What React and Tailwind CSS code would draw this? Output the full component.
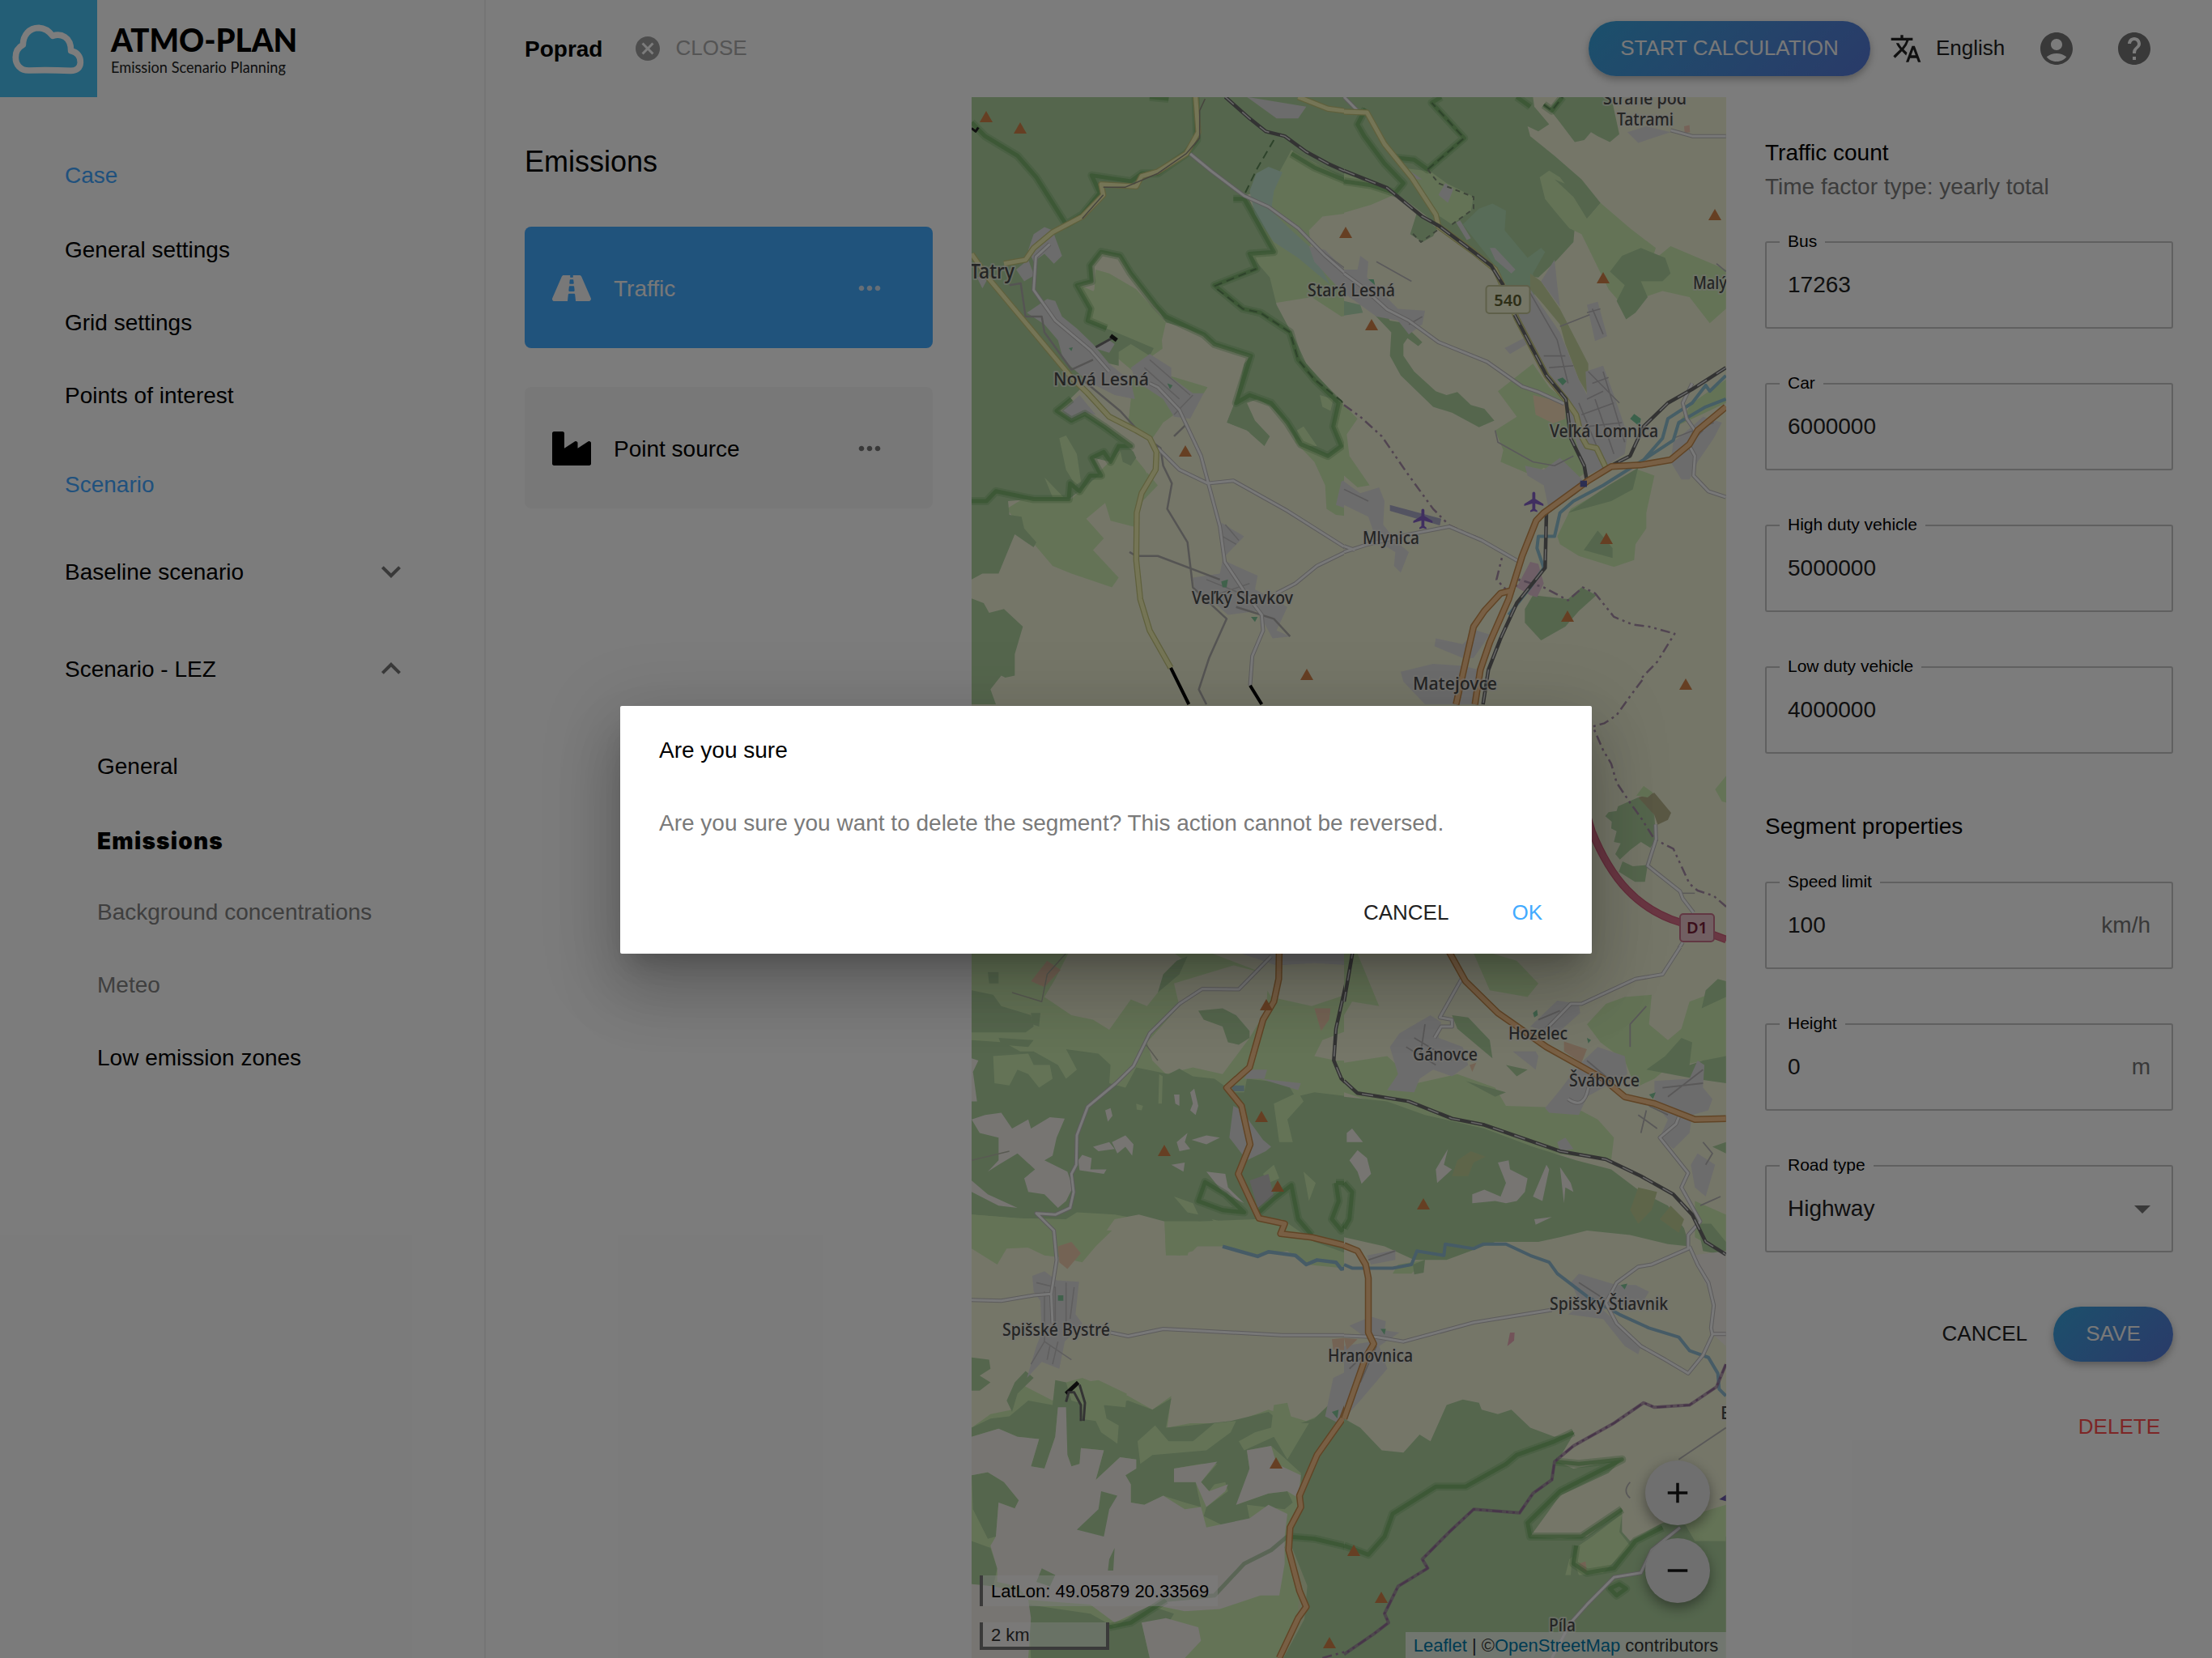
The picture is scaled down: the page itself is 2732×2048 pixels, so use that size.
import React from "react";
import { FaRoad, FaIndustry } from "react-icons/fa";
import {
  MdAccountCircle,
  MdAdd,
  MdArrowDropDown,
  MdCancel,
  MdExpandLess,
  MdExpandMore,
  MdHelp,
  MdMoreHoriz,
  MdRemove,
  MdTranslate,
} from "react-icons/md";

const FOREST = "#add19e";
const MEADOW = "#cdebb0";
const FARM = "#eef0d5";
const TOWN = "#dddcdc";
const BARE = "#f2eee9";
const SAND = "#f5dcba";

function Area({ d, fill }) {
  return <path d={d} fill={fill} />;
}

function Line({ d, color, width, dash, opacity = 1 }) {
  return (
    <path
      d={d}
      fill="none"
      stroke={color}
      strokeWidth={width}
      strokeDasharray={dash}
      opacity={opacity}
      strokeLinejoin="round"
      vectorEffect="non-scaling-stroke"
    />
  );
}

const ROADS = {
  minor: ["#bdbbbb", 5, "#f4f4f4", 3],
  thin: ["#b5b5b1", 2, "#c4c4c0", 1],
  secondary: ["#c3c57c", 7.5, "#eeeeb0", 5],
  primary: ["#c68c4d", 8.5, "#f5c28c", 5.5],
  motorway: ["#cc5c77", 9.5, "#d8708a", 7],
};

function Road({ d, kind = "minor" }) {
  const [c1, w1, c2, w2] = ROADS[kind];
  return (
    <>
      <Line d={d} color={c1} width={w1} />
      <Line d={d} color={c2} width={w2} />
    </>
  );
}

function Rail({ d }) {
  return (
    <>
      <Line d={d} color="#686868" width={4.5} />
      <Line d={d} color="#d2d2d2" width={1.6} dash="14 14" />
    </>
  );
}

function Park({ d }) {
  return (
    <>
      <Line d={d} color="#75ae68" width={10} opacity={0.35} />
      <Line d={d} color="#6ba85e" width={5} opacity={0.6} />
    </>
  );
}

function Border({ d, color = "#a58ca5" }) {
  return <Line d={d} color={color} width={2.5} dash="12 5 3 5 3 5" />;
}

function NorthWest() {
  return (
    <g transform="translate(1190 110) scale(0.33333 0.48469)">
      <Area fill={FARM} d="M0 0H1440V1580H0Z" />
      <Area fill={MEADOW} d="M1200 150L1440 240V1090L1380 1085L1345 1070L1340 1010L1300 950L1230 900L1100 500L1050 420Z" />
      <Area fill={FARM} d="M1440 315L1330 325L1280 360L1290 420L1440 480ZM1155 545L1290 530L1400 580L1440 575V830L1390 790L1270 700Z" />
      <Area fill={MEADOW} d="M750 595L740 660L700 680L760 730L905 760L890 775L740 850L690 900L610 850L630 720L560 680L480 640L430 500Z" />
      <Area fill={MEADOW} d="M600 910L720 1010L650 1060L630 1115L545 1100L525 1055L455 1095L520 1145L480 1175L575 1245L550 1270L400 1235L330 1215L250 1150L160 1070L230 1040L400 1045Z" />
      <Area fill={FOREST} d="M30 20H1440V240L1215 155L1140 250L1050 270L1150 415L1060 420L1135 480L1160 550L1230 640L1270 700L1390 790L1370 860L1400 910L1350 935L1290 915L1230 890L1200 850L1140 810L1090 790L1050 800L1080 845L1135 885L1115 910L1050 870L975 850L1010 790L1040 700L1065 680L930 650L890 625L750 595L710 550L620 470L580 425L510 415L475 450L480 490L420 500L470 560L460 590L530 610L600 630L705 660L690 680L620 650L575 670L575 705L480 690L440 760L350 820L400 845L450 830L520 860L620 910L640 940L620 960L590 950L580 920L545 950L480 940L510 980L430 1025L390 1045L260 1045L165 1050L170 1085L215 1090L225 1120L270 1155L260 1168L190 1135L130 1235L70 1235L30 1250ZM30 1298L75 1310L95 1335L150 1325L220 1370L190 1440L190 1495L155 1500L140 1495L100 1530L120 1568H30Z" />
      <Area fill={MEADOW} d="M490 460L540 470L640 510L750 595L735 640L650 610L520 555L470 530L485 510ZM355 890L380 883L420 930L435 1000L415 1010L380 970ZM300 990L370 1040L330 1040ZM1320 780L1370 790L1360 820L1330 810ZM1235 870L1260 860L1310 910L1260 910Z" />
      <Area fill={FARM} d="M750 595L830 610L890 630L930 650L1045 685L1000 800L975 850L1060 875L900 1000L700 900L740 850L880 790L905 760L850 740L740 680L735 640ZM455 745L620 790L610 850L720 900L680 980L640 930L520 860Z" />
      <Area fill="#bfe3cf" d="M1060 260L1085 215L1130 198L1182 212L1150 260L1140 310L1200 350L1280 400L1360 500L1240 430L1150 390L1080 320Z" />
      <Area fill={TOWN} d="M240 410L260 370L300 352L330 360L365 425L335 445L300 420L260 440ZM195 460L240 435L262 475L225 490ZM50 480L100 470L70 508ZM235 570L310 535L340 540L365 580L420 610L480 650L540 700L620 745L635 790L560 780L460 745L370 690L350 640L300 600ZM365 820L430 780L490 830L450 825L400 845ZM620 710L690 675L770 710L770 735L850 775L890 775L840 840L780 835L740 790L640 745ZM485 660L540 640L560 650L540 672ZM1280 400L1340 410L1440 480V530L1380 500L1300 440ZM955 1105L1040 1140L970 1190ZM850 1245L950 1235L960 1200L1090 1240L1080 1275L1200 1320L1160 1380L1210 1395L1145 1400L1090 1330L980 1340L930 1310L860 1290ZM1380 1060L1400 1000L1440 990V1075ZM1050 20L1270 45L1240 75L1160 75Z" />
      <Line d="M170 500L212 495L230 580L290 580L300 620L400 715L480 690M440 740L580 820L660 880L730 915L740 960L772 1005L755 1070L830 1155L850 1270L975 1350L910 1450L872 1530L900 1568M615 1180L640 1190L720 1190L950 1250M1010 1320L1150 1350L1210 1395M780 885L825 855" color="#adacaa" width={2.5} />
      <Line d="M970 1110L1020 1150M960 1140L1010 1160M690 690L840 780M670 710L800 790M780 830L850 780M1300 400L1440 470M900 1250L1080 1300M930 1290L1060 1260" color="#c0bfbf" width={1.5} />
      <Park d="M30 85L80 120L200 170L270 225L380 345L440 320L505 265L475 220L620 235L660 215L720 215L825 165L865 130L860 20" />
      <Park d="M690 20L760 25M1215 165L1300 200L1440 240M30 1050L85 1050L120 1025L260 1045L390 1045L395 1005L430 1025L470 985L510 985L475 940L520 925L545 950L575 910L620 910L520 860L450 828L400 845L345 820L400 790" />
      <Park d="M530 610L460 590L470 560L420 500L475 490L470 450L510 415L580 425L620 470L710 550L750 580L890 625L930 650L1065 680L1010 800L1060 780L1140 800L1200 850L1250 905L1350 935L1400 910L1370 860L1390 800L1300 740L1240 690L1210 620L1100 570L1035 560L930 500L1085 458L1060 420L1150 415L1040 280L1000 280" />
      <Line d="M1150 130L1090 200L1040 270M930 502L1085 458M940 510L1035 560L1100 570L1210 620L1240 690L1300 740L1400 795L1440 830" color="#5f8a58" width={2} dash="10 6" />
      <Rail d="M970 20L1060 75L1120 108L1190 120L1270 160L1350 190L1440 218" />
      <Road kind="secondary" d="M1240 20L1350 50L1440 58M860 20L870 110L825 165L720 210L660 222L640 248L510 243L518 270L440 325L330 365L260 405L230 435L150 445" />
      <Line d="M895 25L875 55L875 125L825 165L720 215L600 250L518 250M518 270L440 330" color="#918d80" width={1.5} />
      <Road d="M840 165L920 210L1040 272L1130 300L1240 355L1340 425L1440 485M320 395L268 428L260 512L340 590L470 665L540 720M690 750L720 760L800 818L880 935L950 1115L968 1205L1050 1290L1105 1340L1110 1380L1070 1445L1062 1520M720 915L800 970L905 1005L1000 998L1200 1075L1430 1175L1310 1215L1230 1260L1160 1285" />
      <Road kind="secondary" d="M30 420L90 480L400 735L460 775L540 835L640 870L690 890L715 925L712 970L660 1030L642 1080L640 1200L655 1300L690 1380L768 1475" />
      <Line d="M768 1475L835 1568M1062 1520L1105 1568" color="#050505" width={4} />
      <Line d="M490 658L550 635" color="#6e6e6e" width={3} />
      <Line d="M545 628L568 640" color="#1e1e1e" width={5} />
      <Line d="M30 100L45 108L55 98" color="#222" width={3} />
      <Area fill="#83c79a" d="M755 750L775 755L765 765ZM955 1255L980 1250L975 1270L960 1270ZM1065 1345L1090 1345L1080 1358ZM390 660L405 658L400 668Z" />
    </g>
  );
}

function NorthEast() {
  return (
    <g transform="translate(1660 110) scale(0.33333 0.48469)">
      <Area fill={FARM} d="M0 0H1440V1580H0Z" />
      <Area fill={FOREST} d="M0 20H700L705 45L760 90L720 108L680 95L690 120L780 170L880 230L950 290L900 330L860 310L850 390L790 435L720 480L600 470L440 390L345 345L260 300L200 270L0 230Z" />
      <Area fill={FOREST} d="M800 20H990L1020 115L985 135L940 120L915 110L890 130L855 135L800 85L760 50Z" />
      <Area fill={MEADOW} d="M0 215L200 265L100 295L0 315ZM205 200L320 210L380 240L480 275L470 310L400 345L345 320L260 240ZM725 225L760 208L800 225L850 270L900 330L950 290L1060 355L1155 405L1140 440L1210 400L1415 460V560L1355 597L1280 530L1180 515L1030 550L980 510L880 370L835 355L780 310L745 280Z" />
      <Area fill={FOREST} d="M985 465L1030 425L1100 405L1190 430L1210 470L1180 490L1100 490L1125 530L1080 570L1045 587L1010 540L1040 500ZM270 315L345 355L330 375L290 390L245 370ZM85 555L140 560L170 590L215 595L290 645L275 655L235 635L220 650L220 680L260 720L340 770L380 780L420 772L470 805L520 815L557 845L500 862L400 825L330 810L210 730L170 680L175 620Z" />
      <Area fill={FOREST} d="M780 230L850 250L950 290L900 330L850 275Z" />
      <Area fill="#b3dcb4" d="M0 540L60 550L70 570L0 577ZM440 345L500 305L550 292L600 310L595 360L680 430L730 405L745 415L700 470L710 570L690 610L640 580L600 500L560 450Z" />
      <Area fill={MEADOW} d="M570 770L700 700L760 760L830 800L850 870L890 980L840 1005L740 965L700 985L580 950L590 920L560 870L640 835ZM0 805L50 840L10 880L20 935L95 1010L50 1015L0 985ZM1290 800L1415 740V800L1230 860ZM790 1140L840 1070L1090 970L1150 985L1120 1080L1120 1120L1080 1160L1075 1200L1000 1218L870 1190L800 1160Z" />
      <Area fill={FOREST} d="M830 1080L980 1010L1090 965L1070 1020L990 1050ZM888 1175L940 1125L995 1170L995 1195ZM670 1325L700 1290L830 1300L880 1270L935 1290L870 1330L820 1370L730 1405L670 1360Z" />
      <Area fill="#c9d6a0" d="M690 470L730 490L800 560L860 640L905 700L905 780L870 740L820 650L800 600L740 550L690 510Z" />
      <Area fill={TOWN} d="M690 510L740 560L800 620L870 740L900 780L895 720L960 705L1000 780L1050 880L1040 930L960 965L900 985L860 900L820 800L750 730L690 650L640 580ZM0 460L50 460L60 425L90 440L85 480L200 560L300 565L290 600L240 625L200 590L120 580L0 520ZM595 660L680 630L690 645L615 675ZM900 550L940 542L975 630L930 642ZM730 490L780 435L790 500L800 555ZM540 405L560 405L635 460L620 470L560 435ZM0 1000L60 1030L130 1015L150 1050L145 1110L190 1150L240 1180L210 1232L185 1215L190 1180L120 1150L90 1090L0 1060ZM670 960L740 970L800 940L890 1000L760 1075L740 1010L680 985ZM1220 900L1290 860L1330 835L1400 850L1370 890L1310 950L1280 995L1250 995L1210 950ZM340 1400L440 1415L490 1380L540 1390L480 1450L440 1450L335 1420ZM210 1485L330 1465L440 1470L500 1480L500 1568H300L220 1510ZM350 270L375 240L405 255L385 290ZM1050 110L1120 95L1210 110L1090 137ZM235 205L290 230L260 230ZM415 340L430 335L470 380L455 385Z" />
      <Area fill={SAND} d="M700 780L820 800L820 840L775 852L710 830Z" />
      <Area fill="#f0c8b4" d="M1260 95L1280 92L1282 110L1262 112Z" />
      <Area fill="#e0bfd0" d="M640 1270L690 1205L720 1210L740 1260L715 1295L690 1290Z" />
      <Area fill="#a9a9c6" d="M170 1060L360 1095L355 1112L170 1075Z" />
      <Line d="M740 680L820 680M760 710L850 705M905 720L1020 800M920 750L980 735M900 790L960 770M880 830L1000 800M900 860L1030 850M870 800L960 950M930 790L1000 930M960 720L1040 900M560 870L570 900L700 950L780 960L850 935M690 520L790 640L830 750M800 605L910 575M920 560L960 625M900 570L950 560M1380 445L1415 465M1220 890L1370 850M1240 930L1330 870M0 1020L90 1050M240 600L290 580M250 490L120 440" color="#b8b6b8" width={1.6} />
      <Park d="M0 235L100 245L190 265L220 240L150 190L75 120L50 90L80 50M190 175L260 180L310 205L445 125L325 35L360 20M640 20L690 45M740 40L770 55L810 20" />
      <Line d="M310 205L445 125L325 35M740 40L770 55L810 20" color="#5f8a58" width={2} dash="10 6" />
      <Line d="M310 205L350 240L480 275L480 305L400 345M345 360L285 390L250 365" color="#808f78" width={2} dash="6 5" />
      <Line d="M1415 730L1355 770L1340 755L1290 800L1200 840L1180 890L1110 945L960 1010L850 1050L800 1080L780 1140L720 1140L715 1170L740 1220L690 1270L610 1340M1415 790L1340 810L1240 850L1220 895L1110 945" color="#8fbfd0" width={4} />
      <Border d="M0 805L60 835L140 885L230 975L330 1070L390 1112L500 1145L590 1180L565 1250L620 1290L650 1250L740 1270L830 1303L885 1270L930 1285L1000 1345L1070 1365L1130 1370L1225 1388L1160 1460L1090 1510L1030 1568" />
      <Road d="M0 20L50 55M0 470L60 500L160 562L240 590L350 645L530 695L660 758L720 772L815 802M0 1180L90 1160L240 1135L390 1115L510 1150L650 1205M0 1165L40 1175M1210 105L1290 120L1415 120M1290 750L1255 800L1270 840L1300 870L1280 910L1300 935L1295 985L1350 1025L1415 1040" />
      <Road kind="secondary" d="M0 58L85 60L150 140L250 225L340 320L350 350L480 415L560 460L600 520L640 585L750 730L820 790L860 830L880 885L900 910L935 915L970 965" />
      <Rail d="M0 208L160 252L290 325L350 348L480 415L545 450L590 500M632 575L750 730L822 790L840 890L890 960L900 1000M1415 710L1290 765L1200 800L1110 860L1060 935L960 970L860 1025L750 1080L745 1220L640 1310L580 1400L535 1480L515 1568" />
      <Road kind="primary" d="M1415 810L1310 870L1280 905L1210 945L1100 958L990 962L900 1000L740 1080L712 1100L660 1190L610 1300L540 1410L505 1480L485 1568M620 1278L580 1285L520 1330L480 1370L460 1430L415 1568" />
      <Area fill="#5a5fa8" d="M875 998H900V1014H875Z" />
      <Area fill="#79c79a" d="M1060 840L1075 828L1100 840L1095 860ZM790 740L810 735L825 745L810 755ZM90 485L110 485L115 500Z" />
    </g>
  );
}

function East() {
  return (
    <g transform="translate(1960 840) scale(0.33333)">
      <Area fill={FARM} d="M0 0H540V1140H0Z" />
      <Area fill={FOREST} d="M68 505L80 490L110 485L115 468L190 435L220 460L250 500L255 590L235 622L200 600L160 630L122 665L105 645L125 605L100 600L110 560L90 550L92 525ZM118 710L132 672L170 690L225 685L215 748L178 748ZM450 1140L490 1103L540 1140Z" />
      <Area fill="#b8b38c" d="M190 435L250 418L312 492L300 518L262 536L250 500Z" />
      <Area fill={MEADOW} d="M183 428L210 392L245 418L225 435ZM475 405L520 350V455L500 450Z" />
      <Border d="M205 0L160 60L110 130L65 160L22 172L60 260L90 310L110 380L160 455L200 510L250 590L320 625L350 690L380 755L410 780L470 800L516 840" />
      <Line d="M350 790H400" color="#b8b6b4" width={1.5} />
      <Road d="M254 535L256 590L225 688L345 783L355 810L395 862M355 972L280 1088L185 1108L110 1140" />
      <Road kind="motorway" d="M0 500L18 560C90 740 190 850 345 898L516 962" />
    </g>
  );
}

function SouthWest() {
  return (
    <g transform="translate(1190 1170) scale(0.33333 0.55995)">
      <Area fill={MEADOW} d="M0 0H1440V1580H0Z" />
      <Area fill={FARM} d="M400 0H750L820 30L720 100L680 130L620 115L540 182L480 160L400 150L300 110L340 70ZM780 80L1000 40L1130 60L1120 150L1090 170L1060 200L960 280L850 265L750 280L700 250L680 210L800 130ZM860 0H1440V100L1290 130L1140 110L1080 50ZM1300 240L1330 205L1440 180V250L1380 250Z" />
      <Area fill={FOREST} d="M30 95L110 105L140 130L250 150L260 175L230 188H30ZM30 205L150 210L210 230L260 230L350 260L380 290L420 270L380 225L500 235L545 260L540 300L600 310L640 265L760 280L800 268L850 285L930 290L1000 320L1040 320L1050 290L1200 300L1230 330L1300 320L1440 330V680L1300 650L1180 600L1080 600L870 605L700 605L560 590L420 585L380 600L200 598L30 590Z" />
      <Area fill={FOREST} d="M740 60L790 30L830 20L800 60L720 100ZM870 140L960 135L1010 150L1060 185L1060 200L1020 215L980 210L960 175L890 160ZM90 55L130 55L130 80L95 80ZM130 200L260 205L240 220L140 215ZM250 145L285 145L280 175L255 170Z" />
      <Area fill={MEADOW} d="M110 240L240 235L260 260L320 260L330 290L280 310L240 280L200 270L170 305L115 300ZM780 550L850 565L870 590L830 585ZM920 600L1100 625L1200 660L1000 650ZM1150 345L1240 320L1260 340L1200 380L1220 430L1170 430ZM1110 500L1150 480L1170 510L1130 520ZM1260 495L1305 520L1280 560ZM725 280L738 285L735 345L722 345ZM640 345L665 350L660 360L642 358Z" />
      <Area fill={BARE} d="M30 380L80 370L140 365L180 400L240 380L250 400L320 375L375 378L345 420L330 460L300 470L385 495L405 530L380 560L350 575L300 545L240 540L225 510L265 490L200 455L130 480L90 495L130 470L130 420L60 410ZM30 515L90 545L200 575L130 570L30 540ZM425 470L440 458L475 465L470 490L530 490L520 500L430 492ZM550 430L600 415L630 435L625 460L600 440L570 455ZM525 360L545 355L552 372L535 385ZM480 440L540 430L560 445L500 450ZM780 325L800 325L800 350L785 345ZM840 320L855 312L870 350L860 370L840 360L850 345ZM790 430L830 410L820 430L840 445L800 450ZM845 425L900 415L950 420L900 435ZM770 480L820 475L815 495ZM900 495L970 500L980 530L1040 565L960 540ZM30 245L55 250L35 275L50 340L30 340Z" />
      <Area fill={FARM} d="M30 640L230 660L300 680L440 690L500 650L560 600L650 590L745 605L750 680L830 680L840 660L960 660L1100 680L1200 670L1270 700L1440 710V1000L1270 1045L1130 1020L990 1050L840 1050L755 1060L770 990L700 1020L610 990L440 950L380 960L330 1000L200 960L180 1020L100 1030L30 1060Z" />
      <Area fill={MEADOW} d="M30 590L200 598L340 600L380 620L550 625L490 660L440 695L400 690L350 660L160 665L125 700L30 665ZM745 605L870 605L900 640L850 670L800 680L750 675Z" />
      <Area fill={FOREST} d="M30 905L95 910L100 930L60 945L100 960L60 978H30ZM230 935L260 950L200 985L180 1025L160 1000L190 960ZM340 955L380 960L400 1000L460 1010L520 1010L610 1000L700 1020L770 995L750 1060L840 1055L990 1045L1130 1025L1200 1060L1300 1040L1440 960V1580H1170L1230 1500L1270 1450L1195 1300L1250 1230V1160L1140 1100L1050 1110L1060 1150L1040 1210L1010 1230L1130 1205L1200 1200L1220 1225L1190 1240L1050 1230L1060 1260L960 1275L890 1255L900 1235L980 1200L970 1180L930 1185L910 1200L880 1180L940 1140L880 1140L780 1150L780 1180L860 1180L880 1235L820 1225L740 1210L670 1230L620 1225V1185L600 1165L640 1150V1130L580 1125L490 1175L520 1110L435 1105L430 1140L400 1145L385 1120L350 1015L340 1080L300 1150L250 1145L280 1085L200 1080L130 1062L30 1080V1060L100 1040L170 1035L240 1000L330 1010Z" />
      <Area fill={FOREST} d="M30 1165L90 1158L150 1180L205 1220L190 1238L130 1225L120 1300L90 1305L35 1240ZM30 1310L100 1325L125 1370L110 1410L30 1405ZM510 1200L570 1210L540 1240L520 1300L420 1285L500 1240ZM540 1350L560 1325L555 1375L535 1375ZM290 1370L340 1385L270 1400ZM240 1450L470 1470L560 1500L600 1568H250ZM630 1400L680 1380L660 1420ZM560 1500L680 1450L780 1470L750 1500L660 1490L690 1568H560Z" />
      <Area fill={BARE} d="M30 1080L130 1062L200 1080L280 1085L250 1145L300 1150L340 1080L350 1015L380 1015L385 1120L400 1145L430 1140L435 1105L520 1110L490 1175L580 1125L640 1130V1150L600 1165L620 1185V1225L670 1230L740 1210L820 1240L880 1235L900 1280L1060 1260L1130 1230L1200 1250L1190 1300L1190 1360L1170 1430L1100 1430L950 1460L820 1465L700 1450L560 1490L470 1450L240 1440L200 1410L125 1400V1370L100 1320L120 1300L130 1225L190 1238L205 1220L150 1180L90 1158L30 1165ZM1050 1110L1140 1100L1160 1140L1250 1165L1240 1215L1200 1200L1130 1205L1010 1230L1060 1150ZM780 1150L940 1135L880 1180L910 1200L980 1185L970 1200L900 1235L860 1180L780 1180Z" />
      <Area fill={BARE} d="M30 1405L110 1410L200 1420L240 1440L250 1480L240 1568H30ZM660 1490L750 1480L870 1500L880 1530L820 1568H690Z" />
      <Area fill={FOREST} d="M510 1200L570 1210L540 1240L520 1300L420 1285L500 1240ZM540 1350L560 1325L555 1375L535 1375ZM290 1370L340 1385L320 1410L270 1400Z" />
      <Area fill={MEADOW} d="M440 960L500 955L605 985L600 1015L520 1010L530 1040L575 1055L570 1095L510 1070L490 1045L430 1040ZM645 1090L710 1055L760 1090L850 1090L930 1050L1010 1045L990 1070L900 1110L700 1120L655 1140ZM1020 1090L1080 1070L1140 1060L1150 1010L1200 1005L1220 1050L1280 1050L1200 1130L1150 1080L1040 1110ZM820 1465L950 1465L1130 1475L1100 1540L1040 1530L870 1500Z" />
      <Area fill="#edcbac" d="M250 75L310 30L360 50L300 88ZM350 660L400 650L435 675L385 710L355 695ZM1300 135L1360 135L1355 160L1325 185ZM1365 865L1440 860V890L1370 888Z" />
      <Area fill={TOWN} d="M255 725L300 715L345 735L428 738L415 810L440 830L375 870L355 930L290 915L235 950L270 880L290 850L285 780L260 760ZM1000 350L1030 360L1110 425L1140 440L1120 450L1050 470L985 420ZM1040 290L1060 270L1125 270L1115 290ZM1100 290L1250 300L1240 315ZM960 0H1440V40L1300 35L1160 40ZM1370 950L1440 930V1020L1390 1050L1340 1035ZM1430 830L1440 830V880Z" />
      <Area fill="#c4c2c2" d="M1060 515L1130 500L1150 550L1090 575Z" />
      <Area fill="#9fc3c8" d="M990 305H1040V318H1000Z" />
      <Line d="M270 740L340 750L340 830M300 760L300 870M380 740L380 830M410 750L395 820M250 920L300 870L400 910M320 880L310 910M350 870L330 920" color="#c2c1c1" width={1.6} />
      <Line d="M960 660L1090 682L1130 672L1230 680L1270 700L1310 690L1380 695L1400 710L1440 705" color="#8fbad0" width={4.5} />
      <Park d="M870 560L895 518L970 545L1040 585L960 580ZM1095 585L1150 555L1215 525L1240 600L1290 635M1380 520L1440 520M1380 520L1390 560L1365 600L1400 625L1440 600" />
      <Park d="M540 1500L620 1490L750 1440M1200 1300L1300 1305L1440 1325" />
      <Line d="M750 1440L930 1430L1040 1360L1140 1330L1200 1300" color="#7fb074" width={5} opacity={0.5} />
      <Line d="M30 470L170 450M180 100L290 120L310 60L400 0M670 210L720 250" color="#b5b8a8" width={1.5} />
      <Road d="M1140 20L1020 93L885 92L800 125L690 190L630 262L565 300L460 352L420 415L418 480L400 500L408 540L395 575L340 590L270 587L335 625L345 690L325 765L330 830M30 778L140 780L260 768L325 765M545 850L610 858L740 842L870 846L1180 856L1440 856" />
      <Rail d="M1440 20L1410 100L1380 180L1372 250L1400 290L1440 312" />
      <Line d="M1200 1320L1260 1410L1250 1480L1170 1568" color="#d6e3b8" width={9} />
      <Road kind="primary" d="M1170 0L1168 70L1150 120L1110 160L1060 265L975 310L1030 350L1062 435L1018 500L1095 598L1190 610L1175 632L1290 640L1440 662M1440 985L1405 1040L1310 1120L1245 1210L1250 1235L1210 1280L1205 1330L1245 1420L1270 1455L1240 1480L1170 1568" />
      <Line d="M380 985L425 960" color="#1c1c1c" width={5} />
      <Line d="M390 982L380 1003M385 982L410 982L435 1010V1045M430 965L450 1005L445 1045" color="#6a6a6a" width={3} />
      <Area fill="#83c79a" d="M350 768H370V780H350ZM1365 1025L1390 1020L1385 1040Z" />
      <Border d="M1330 1568L1440 1550" color="#9d7c9d" />
    </g>
  );
}

function SouthEast() {
  return (
    <g transform="translate(1660 1170) scale(0.33333 0.55995)">
      <Area fill={FARM} d="M0 0H1440V1580H0Z" />
      <Area fill={MEADOW} d="M0 0H40L130 130L30 120L0 150ZM0 255L160 240L270 300L420 280L560 310L600 350L860 355L940 380L1000 420L990 470L700 450L500 400L200 360L0 320ZM470 0L640 30L720 80L680 110L540 95ZM900 170L970 125L1040 110L1140 105L1130 170L1200 205L1250 180L1280 120L1415 90V300L1330 250L1190 270L1150 290L1080 310L1040 250L950 210ZM1300 560L1415 590V680L1300 640ZM200 700L300 690L250 720L180 720Z" />
      <Area fill={FOREST} d="M0 330L160 340L300 370L520 400L700 440L860 470L990 490L1100 540L1200 570L1260 620L1280 660L1200 655L1060 635L900 625L800 640L720 650L560 650L380 690L260 690L150 660L0 640ZM1120 270L1190 240L1250 200L1290 210L1280 260L1330 250L1415 240V300L1300 290ZM1340 95L1385 70L1415 75V110L1325 135ZM400 150L460 155L540 205L550 245L500 220L420 180ZM1310 610L1360 610L1415 650V680L1330 670ZM255 700L300 690L295 718L260 722ZM600 260L680 270L640 285ZM450 295L600 320L560 330ZM1365 440L1415 430V455Z" />
      <Area fill={FOREST} d="M0 1040L60 1060L140 1110L220 1115L280 1075L320 1090L380 1010L440 998L500 1005L510 1020L570 1030L620 1020L690 1060L780 1080L855 1070L790 1135L850 1150L1030 1130L980 1160L800 1210L690 1300L800 1305L900 1300L1030 1240V1290L1060 1310L1180 1270L1260 1260L1415 1300V1568H0Z" />
      <Area fill={MEADOW} d="M870 1320L920 1300L1030 1250L1020 1290L1060 1320L960 1380L870 1385L850 1350ZM820 1385L835 1350L845 1345L840 1385ZM1250 1260L1415 1230V1310L1300 1310Z" />
      <Area fill={BARE} d="M1290 680L1415 670V880L1360 850L1370 780ZM20 470L50 448L85 465L100 500L65 522L50 495ZM340 490L385 445L370 480L400 490L345 520ZM570 475L610 470L615 490L680 510L670 540L640 560L600 565L560 560L475 565L475 545L520 535L580 550L600 520ZM700 550L750 480L760 490L735 560ZM800 485L840 520L850 540L820 530L815 565ZM705 600L770 595L710 612ZM10 410L30 400L70 430L10 430Z" />
      <Area fill={TOWN} d="M205 190L320 150L360 165L350 200L440 220L460 260L400 285L330 270L280 290L260 320L160 315L200 280L170 220ZM690 175L790 118L870 125L875 145L800 185L770 190ZM625 230L710 230L720 240L710 270ZM870 260L940 220L1040 240L1050 280L900 330L870 370L760 365L745 355L800 315ZM1150 295L1280 290L1310 250L1335 260L1330 310L1365 335L1350 360L1290 370L1280 410L1220 445L1170 420L1200 380L1150 345ZM1285 480L1310 455L1375 480L1340 550L1300 530ZM840 740L870 720L1010 745L1080 745L1130 760L1110 780L960 800L1100 880L1090 898L1040 880L960 820L830 810L880 790ZM20 835L100 815L155 825L150 845L205 850L130 880L160 930L60 1000L0 1040V880L100 870ZM790 430L820 420L850 445L800 450ZM85 680L190 668V690L100 700Z" />
      <Area fill="#edcbac" d="M815 208L900 225L880 255L815 230ZM465 260L490 255L475 275ZM0 862L50 865L10 888ZM870 1360L895 1355L900 1380L880 1375Z" />
      <Area fill="#e8a9b6" d="M605 880L615 850L632 850L630 868Z" />
      <Area fill="#c0cf96" d="M400 505L420 470L470 450L525 462L480 475L460 505ZM1060 580L1090 530L1160 540L1140 580L1090 610ZM1170 600L1210 570L1260 600L1240 630Z" />
      <Line d="M260 200L400 250M230 220L340 260M300 170L280 250M720 160L800 140M900 250L1000 300M1180 310L1330 300M1200 330L1330 270M1090 370L1160 400M1120 360L1100 410M1130 350L1200 370M1320 570L1395 550M1330 430L1365 455L1340 480M90 690L190 670M20 930L90 890M60 960L120 880M1060 1180Q1030 1200 1060 1215M1240 1130L1415 1060M1060 220L1060 170L1120 130M870 740L1000 790" color="#b5b3b3" width={1.8} />
      <Park d="M0 1320L90 1340L150 1300L180 1250L340 1190L450 1190L600 1140L640 1120L780 1090L850 1070M785 1135L870 1140L1030 1130L800 1200L680 1270L690 1300L880 1300L1030 1240M860 1320L850 1360L900 1380L1000 1370L1080 1310L1180 1280M985 1415L1020 1405L1045 1415L1010 1430ZM0 520L30 540L20 600L0 620" />
      <Line d="M0 700L30 708L180 708L250 700L270 670L370 680L375 655L480 665L515 655L600 655L690 680L760 695L790 720L900 770L1020 810L1130 840L1240 860L1280 890L1350 905L1385 940L1390 975L1415 990" color="#8fbad0" width={4} />
      <Border color="#8c668c" d="M1415 920L1380 970L1280 1010L1150 1015L1110 1005L1000 1050L850 1100L780 1135L770 1175L700 1205L650 1248L480 1240L390 1290L290 1350L310 1370L200 1410L150 1470L165 1490L110 1515L0 1560" />
      <Line opacity={0.65} color="#95709a" width={4} d="M1415 920L1380 970L1280 1010L1150 1015L1110 1005L1000 1050L850 1100L780 1135L770 1175L700 1205L650 1248L480 1240L390 1290L290 1350L310 1370L200 1410L150 1470L165 1490L110 1515L0 1560" />
      <Road d="M1245 0L1180 60L1080 70L880 125L840 125L750 180M440 65L355 155L400 160L400 175L360 175L335 200M830 335Q890 360 905 310M1240 375L1230 390L1170 420L1275 498L1250 530L1320 605L1275 635V665L1140 700L1090 705L1010 740L970 785L1010 830L1100 880L1190 910L1275 940L1330 900L1365 855L1360 840L1370 790L1350 740L1310 700L1280 660M1365 853H1415M0 857L120 860L220 870L480 828L770 800M1245 1280L1140 1330L1100 1380L1000 1390L900 1450L840 1490L770 1568" />
      <Rail d="M35 0L0 120M0 295L50 322L240 340L400 378L520 392L800 450L970 468L1100 505L1220 545L1290 590L1340 650L1415 678" />
      <Road kind="primary" d="M380 0L450 75L570 145L750 220L960 290L1040 330L1150 345L1300 380L1415 378M0 658L50 670L80 700L90 730L90 850L110 875L80 905L0 1040" />
      <Area fill="#83c79a" d="M700 145L715 138L718 150L705 155ZM900 200L915 205L905 212ZM1130 325L1155 320L1145 335ZM1025 745L1050 742L1040 755ZM135 842L155 842L150 855Z" />
      <Area fill="#6a58a8" d="M1390 1218L1415 1208V1222Z" />
    </g>
  );
}

const PEAKS = [
  [1218, 145], [1260, 159], [1662, 288], [1464, 558], [1614, 834], [2118, 266],
  [1980, 344], [1694, 402], [1984, 666], [1936, 762], [2082, 846], [1564, 1242],
  [1558, 1380], [1438, 1422], [1578, 1466], [1758, 1488], [1576, 1808], [1672, 1916],
  [1706, 1974], [1642, 2030],
];

const PLACES = [
  [1198, 344, 55, 26, "Tatry"],
  [1301, 476, 118, 22, "Nová Lesná"],
  [1615, 366, 108, 21, "Stará Lesná"],
  [1472, 746, 125, 21, "Veľký Slavkov"],
  [1683, 672, 70, 21, "Mlynica"],
  [1745, 852, 104, 22, "Matejovce"],
  [1914, 540, 134, 21, "Veľká Lomnica"],
  [2091, 357, 42, 21, "Malý"],
  [1980, 129, 103, 21, "Strane pod"],
  [1997, 155, 70, 21, "Tatrami"],
  [1745, 1310, 80, 21, "Gánovce"],
  [1863, 1284, 73, 21, "Hozelec"],
  [1938, 1342, 87, 21, "Švábovce"],
  [1914, 1618, 146, 21, "Spišský Štiavnik"],
  [1640, 1682, 105, 21, "Hranovnica"],
  [1238, 1650, 133, 21, "Spišské Bystré"],
  [1913, 2015, 33, 21, "Píla"],
  [2125, 1753, 12, 21, "E"],
];

const PLANE =
  "M21 16v-2l-8-5V3.500c0-.83-.67-1.500-1.500-1.500S10 2.670 10 3.500V9l-8 5v2l8-2.500V19l-2 1.500V22l3.500-1 3.500 1v-1.500L13 19v-5.500l8 2.500z";

function TerrainMap() {
  return (
    <svg className="block h-full w-full" viewBox="1200 120 932 1928" preserveAspectRatio="none">
      <NorthWest />
      <NorthEast />
      <East />
      <SouthWest />
      <SouthEast />
      {PEAKS.map(([x, y]) => (
        <path key={`${x}-${y}`} d={`M${x} ${y - 8}l8 14h-16z`} fill="#d08249" />
      ))}
      <g fill="#8461c4">
        <path d={PLANE} transform="translate(1743 626) scale(1.25)" />
        <path d={PLANE} transform="translate(1880 605) scale(1.25)" />
      </g>
      <g
        fontFamily="'Noto Sans', 'Open Sans', sans-serif"
        fontWeight="500"
        fill="#4a4a4a"
        stroke="#ecebe6"
        strokeOpacity="0.6"
        strokeWidth="4"
        strokeLinejoin="round"
        paintOrder="stroke"
      >
        {PLACES.map(([x, y, w, size, name]) => (
          <text key={name} x={x} y={y} fontSize={size} textLength={w} lengthAdjust="spacingAndGlyphs">
            {name}
          </text>
        ))}
      </g>
      <g fontFamily="'Noto Sans', sans-serif" fontWeight="600" textAnchor="middle">
        <rect x="1835.500" y="353" width="54" height="34" rx="4" fill="#eef0d0" stroke="#c2c497" strokeWidth="2" />
        <text x="1862.500" y="378" fontSize="20" fill="#5d5f30">540</text>
        <rect x="2075" y="1129" width="42" height="34" rx="4" fill="#e6c3c8" stroke="#c9708a" strokeWidth="2" />
        <text x="2096" y="1153" fontSize="20" fill="#7a1f3a">D1</text>
      </g>
    </svg>
  );
}

function Logo() {
  return (
    <div className="flex h-[120px] items-start">
      <div className="flex size-[120px] items-center justify-center bg-[#49c0f0]">
        <svg viewBox="0 0 360 360" className="size-full" fill="none" stroke="#fff">
          <path
            d="M110 261C75 263 57 238 58 212C58 190 68 175 85 166C86 130 108 103 144 103C168 104 184 118 195 133C225 123 263 135 263 188C285 193 299 208 298 232C297 252 284 262 262 262C210 260 165 259 110 261Z"
            strokeWidth="23"
            strokeLinejoin="round"
          />
        </svg>
      </div>
      <div className="flex flex-col pt-[28px] pl-[17px]">
        <div className="origin-left scale-x-[0.985] font-['Lato'] text-[39px] leading-[42px] font-black text-black">ATMO-PLAN</div>
        <div className="mt-px origin-left scale-x-[0.955] font-['Lato'] text-[19px] leading-6 text-[#222]">Emission Scenario Planning</div>
      </div>
    </div>
  );
}

function NavItem({ children, className = "" }) {
  return <div className={`flex h-[90px] items-center ${className}`}>{children}</div>;
}

function Sidebar() {
  return (
    <aside className="h-full w-[600px] shrink-0 border-r-2 border-[#efefef]">
      <Logo />
      <nav className="pt-[52px] pl-20">
        <NavItem className="mb-[2px] text-[#42a5ff]">Case</NavItem>
        <NavItem>General settings</NavItem>
        <NavItem>Grid settings</NavItem>
        <NavItem>Points of interest</NavItem>
        <NavItem className="mt-5 mb-[3px] text-[#42a5ff]">Scenario</NavItem>
        <div className="flex h-[120px] items-center justify-between pr-[91px]">
          Baseline scenario
          <MdExpandMore className="-mt-[2px] size-12 text-[#757575]" />
        </div>
        <div className="flex h-[120px] items-center justify-between pr-[91px]">
          Scenario - LEZ
          <MdExpandLess className="-mt-[2px] size-12 text-[#757575]" />
        </div>
        <div className="mt-[15px] pl-10">
          <NavItem>General</NavItem>
          <NavItem className="pt-[3px] font-['Inter'] tracking-[1.2px] font-black">Emissions</NavItem>
          <NavItem className="text-[#808080]">Background concentrations</NavItem>
          <NavItem className="text-[#808080]">Meteo</NavItem>
          <NavItem>Low emission zones</NavItem>
        </div>
      </nav>
    </aside>
  );
}

function Pill({ children, className }) {
  return (
    <button
      className={`flex h-[68px] items-center justify-center rounded-full bg-linear-135 from-[#36a3dc] to-[#5577d6] pb-[2px] text-[26px] text-[#f4f4f4] shadow-[0_4px_10px_rgba(0,0,0,0.28)] ${className}`}
    >
      {children}
    </button>
  );
}

function Header() {
  return (
    <header className="flex h-[120px] items-center pl-[48px]">
      <div className="pt-px font-bold">Poprad</div>
      <MdCancel className="ml-[38px] size-9 text-[#9e9e9e]" />
      <div className="ml-[16px] pb-[2px] text-[26px] text-[#ababab]">CLOSE</div>
      <div className="ml-auto flex items-center">
        <Pill className="w-[348px]">START CALCULATION</Pill>
        <MdTranslate className="ml-6 size-10 text-[#212121]" />
        <div className="ml-[17px] w-[125px] pb-[2px] text-[26px] text-[#212121]">English</div>
        <MdAccountCircle className="size-12 text-[#757575]" />
        <MdHelp className="mr-[72px] ml-12 size-12 text-[#757575]" />
      </div>
    </header>
  );
}

function EmissionCard({ icon: Icon, label, className, dots }) {
  return (
    <div className={`flex h-[150px] w-[504px] items-center rounded-lg pl-[34px] ${className}`}>
      <Icon className="mt-px size-12" />
      <div className="ml-7 pt-[3px]">{label}</div>
      <MdMoreHoriz className={`mt-px mr-[58px] ml-auto size-10 ${dots}`} />
    </div>
  );
}

function Field({ label, value, suffix }) {
  return (
    <fieldset className="h-[118px] w-[504px] rounded-[3px] border-2 border-[#c4c4c4] pl-[16px]">
      <legend className="h-[21px] px-[10px] text-[21px] leading-[19px] text-black">{label}</legend>
      <div className="flex h-[85px] items-center justify-between pr-[26px] pl-[10px] text-[#212121]">
        <span>{value}</span>
        {suffix}
      </div>
    </fieldset>
  );
}

function DetailsPanel() {
  return (
    <section className="w-[600px] shrink-0 pt-[48px] pl-12">
      <div className="leading-[42px]">Traffic count</div>
      <div className="leading-[42px] text-[#7a7a7a]">Time factor type: yearly total</div>
      <div className="mt-[36px] flex flex-col gap-[57px]">
        <Field label="Bus" value="17263" />
        <Field label="Car" value="6000000" />
        <Field label="High duty vehicle" value="5000000" />
        <Field label="Low duty vehicle" value="4000000" />
      </div>
      <div className="mt-[70px] leading-10">Segment properties</div>
      <div className="mt-[38px] flex flex-col gap-[57px]">
        <Field label="Speed limit" value="100" suffix={<span className="text-[#757575]">km/h</span>} />
        <Field label="Height" value="0" suffix={<span className="text-[#757575]">m</span>} />
        <Field label="Road type" value="Highway" suffix={<MdArrowDropDown className="-mr-[14px] size-12 text-[#757575]" />} />
      </div>
      <div className="mt-[67px] flex w-[504px] items-center justify-end text-[26px]">
        <button className="mr-8 pb-[2px] text-[#212121]">CANCEL</button>
        <Pill className="w-[148px]">SAVE</Pill>
      </div>
      <div className="mt-[60px] w-[488px] text-right text-[26px] leading-10 text-[#ff4f4f]">DELETE</div>
    </section>
  );
}

function MapPanel() {
  return (
    <section className="relative h-full w-[932px] shrink-0 overflow-hidden">
      <TerrainMap />
      <div className="absolute right-5 bottom-[68px] flex flex-col gap-4">
        {[MdAdd, MdRemove].map((Icon, i) => (
          <button key={i} className="flex size-20 items-center justify-center rounded-full bg-[#e2e2e2] shadow-[0_6px_16px_rgba(0,0,0,0.4)]">
            <Icon className="size-[42px] text-[#161616]" />
          </button>
        ))}
      </div>
      <div className="absolute bottom-[10px] left-[10px] flex flex-col items-start gap-5 text-[22px] leading-[30px] text-black">
        <div className="flex h-[38px] w-[294px] items-center border-l-4 border-[#777] bg-white/50 pt-[2px] pl-[10px] whitespace-nowrap">
          LatLon: 49.05879 20.33569
        </div>
        <div className="flex h-[34px] w-[160px] items-center border-4 border-t-0 border-[#777] bg-white/50 pt-[2px] pl-[10px] text-[#333]">
          2 km
        </div>
      </div>
      <div className="absolute right-0 bottom-0 flex h-8 w-[396px] items-center justify-center bg-white/70 text-[22px] whitespace-pre text-[#333]">
        <span className="text-[#0078a8]">Leaflet</span> | ©<span className="text-[#0078a8]">OpenStreetMap</span> contributors
      </div>
    </section>
  );
}

function ConfirmDialog() {
  return (
    <div className="absolute inset-0 flex items-start justify-center bg-black/51 pt-[872px]">
      <div className="flex h-[306px] w-[1200px] flex-col rounded-[2px] bg-white px-12 pt-[35px] shadow-[0_22px_30px_-14px_rgba(0,0,0,0.2),0_48px_76px_6px_rgba(0,0,0,0.14),0_18px_92px_16px_rgba(0,0,0,0.12)]">
        <div className="leading-10">Are you sure</div>
        <div className="mt-[50px] leading-10 text-[#7a7a7a]">
          Are you sure you want to delete the segment? This action cannot be reversed.
        </div>
        <div className="mt-[70px] flex justify-end pr-[13px] text-[26px] leading-10">
          <button className="mr-[78px] text-[#212121]">CANCEL</button>
          <button className="text-[#42aaff]">OK</button>
        </div>
      </div>
    </div>
  );
}

export default function App() {
  return (
    <div className="relative flex h-[2048px] w-[2732px] overflow-hidden bg-[#fcfcfc] font-['Liberation_Sans',sans-serif] text-[28px] text-black">
      <Sidebar />
      <div className="flex grow flex-col">
        <Header />
        <main className="flex h-[1928px]">
          <section className="w-[600px] shrink-0 pt-[55px] pl-[48px]">
            <h1 className="text-[36px] leading-[50px]">Emissions</h1>
            <div className="mt-[55px] flex flex-col gap-12">
              <EmissionCard icon={FaRoad} label="Traffic" className="bg-[#42a9fc] text-[#f4f4f4]" dots="text-[#d0e0f0]" />
              <EmissionCard icon={FaIndustry} label="Point source" className="bg-[#f5f5f5]" dots="text-[#757575]" />
            </div>
          </section>
          <MapPanel />
          <DetailsPanel />
        </main>
      </div>
      <ConfirmDialog />
    </div>
  );
}
